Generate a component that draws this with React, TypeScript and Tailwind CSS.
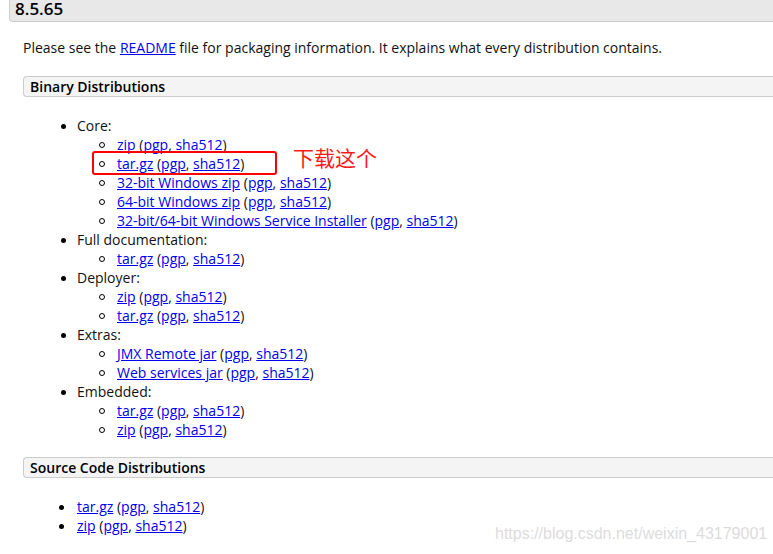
import React from 'react';

function A({ children }: { children: React.ReactNode }) {
  return <a className="text-[#0000ee] underline cursor-pointer">{children}</a>;
}

function Sums({ name }: { name: string }) {
  return (
    <>
      <A>{name}</A> (<A>pgp</A>, <A>sha512</A>)
    </>
  );
}

function Top({ label }: { label: string }) {
  return (
    <div className="flex items-center h-[19px]">
      <span className="ml-[61px] mr-[11px] mt-[2px] w-[5px] h-[5px] rounded-full bg-black shrink-0" />
      <span>{label}</span>
    </div>
  );
}

function Sub({ name }: { name: string }) {
  return (
    <div className="flex items-center h-[19px]">
      <span className="ml-[99px] mr-[12px] w-[6px] h-[6px] rounded-full border border-black shrink-0" />
      <span className="whitespace-nowrap">
        <Sums name={name} />
      </span>
    </div>
  );
}

function SectionBar({ title }: { title: string }) {
  return (
    <div className="ml-[23px] h-[21px] bg-[#f4f4f4] border border-r-0 border-[#cccccc] rounded-l-[4px] pl-[6px] text-[14px] leading-[19px] font-semibold text-black">
      {title}
    </div>
  );
}

const binary: { label: string; items: string[] }[] = [
  {
    label: 'Core:',
    items: ['zip', 'tar.gz', '32-bit Windows zip', '64-bit Windows zip', '32-bit/64-bit Windows Service Installer'],
  },
  { label: 'Full documentation:', items: ['tar.gz'] },
  { label: 'Deployer:', items: ['zip', 'tar.gz'] },
  { label: 'Extras:', items: ['JMX Remote jar', 'Web services jar'] },
  { label: 'Embedded:', items: ['tar.gz', 'zip'] },
];

export default function App() {
  return (
    <div className="relative w-[773px] h-[554px] overflow-hidden bg-white font-['Open_Sans',sans-serif] text-[14px] leading-[19px] text-[#111]">
      <div className="ml-[9px] h-[22px] bg-[#e8e8e8] border-b border-l border-[#cccccc] rounded-bl-[4px] pl-[5px] text-[17px] leading-[17px] font-semibold text-black">
        8.5.65
      </div>

      <p className="mt-[16px] pl-[23px] whitespace-nowrap">
        Please see the <A>README</A> file for packaging information. It explains what every distribution contains.
      </p>

      <div className="mt-[19px]">
        <SectionBar title="Binary Distributions" />
      </div>

      <div className="mt-[19px]">
        {binary.map((group) => (
          <div key={group.label}>
            <Top label={group.label} />
            {group.items.map((it, i) => (
              <Sub key={i} name={it} />
            ))}
          </div>
        ))}
      </div>

      <div className="mt-[18px]">
        <SectionBar title="Source Code Distributions" />
      </div>

      <div className="mt-[19px]">
        {['tar.gz', 'zip'].map((n) => (
          <div key={n} className="flex items-center h-[19px]">
            <span className="ml-[59px] mr-[13px] mt-[2px] w-[5px] h-[5px] rounded-full bg-black shrink-0" />
            <span className="whitespace-nowrap">
              <Sums name={n} />
            </span>
          </div>
        ))}
      </div>

      {/* annotation */}
      <div className="absolute left-[92px] top-[151px] w-[185px] h-[24px] border-2 border-[#ff0000] rounded-[3px]" />
      <div className="absolute left-[293px] top-[145px] text-[21px] leading-[24px] text-[#ff1a1a] font-['Noto_Sans_CJK_SC',sans-serif]">
        下载这个
      </div>

      <div className="absolute left-[495px] top-[524px] text-[16px] leading-[19px] text-[#dcdcdc] font-['Liberation_Sans',sans-serif]">
        https://blog.csdn.net/weixin_43179001
      </div>
    </div>
  );
}
